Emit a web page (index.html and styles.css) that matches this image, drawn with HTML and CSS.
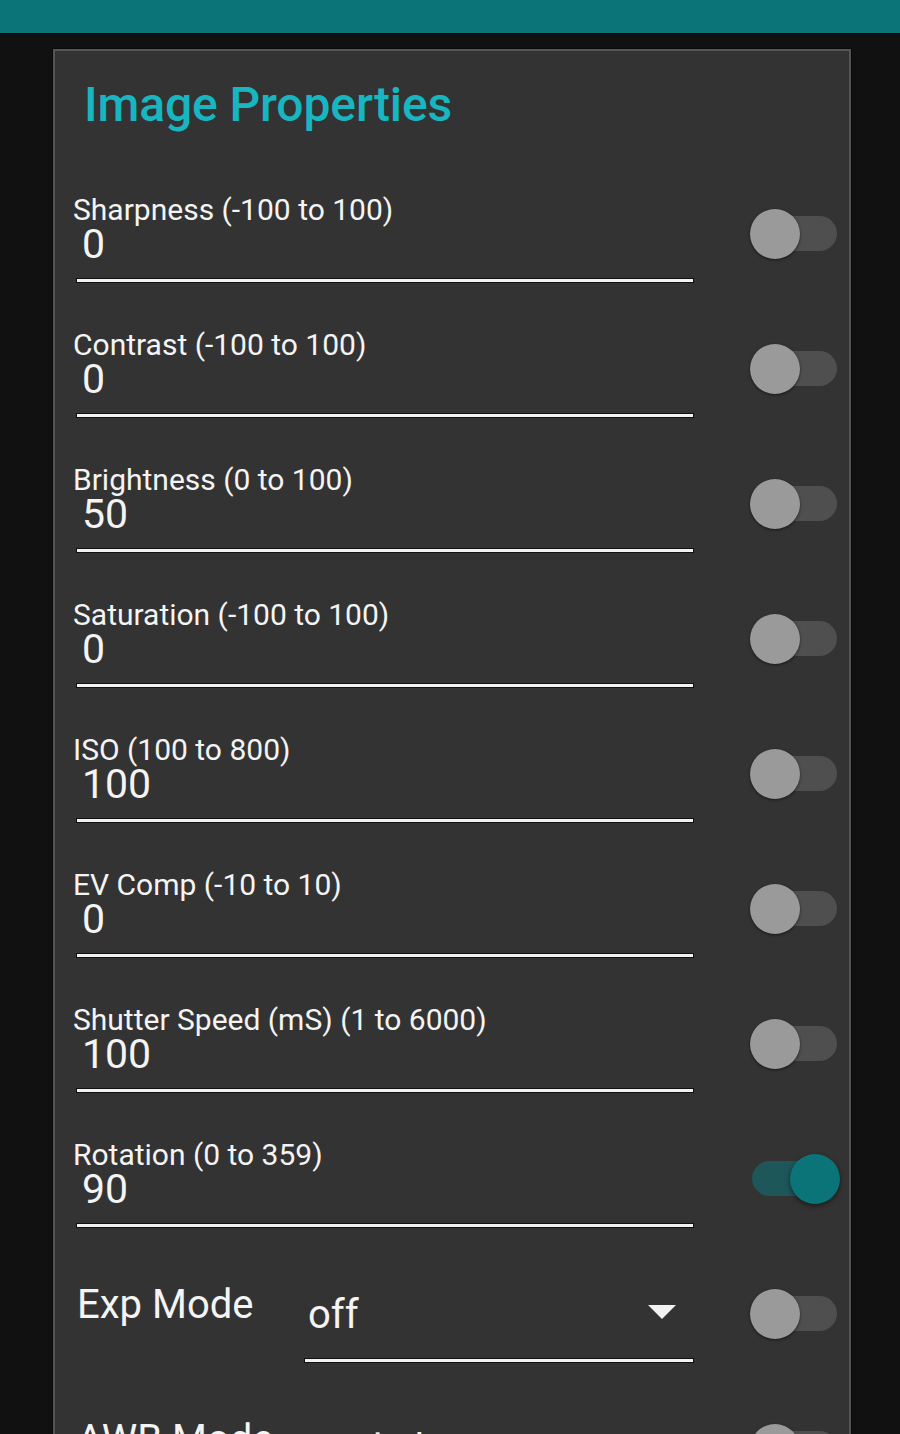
FILE: index.html
```html
<!DOCTYPE html>
<html>
<head>
<meta charset="utf-8">
<link rel="stylesheet" href="styles.css">
</head>
<body>
<div class="topbar"></div>
<div class="card">
  <h1 class="title">Image Properties</h1>

  <div class="row">
    <div class="field">
      <div class="label">Sharpness (-100 to 100)</div>
      <div class="value">0</div>
      <div class="underline"></div>
    </div>
    <div class="toggle"><span class="track"></span><span class="thumb"></span></div>
  </div>

  <div class="row">
    <div class="field">
      <div class="label">Contrast (-100 to 100)</div>
      <div class="value">0</div>
      <div class="underline"></div>
    </div>
    <div class="toggle"><span class="track"></span><span class="thumb"></span></div>
  </div>

  <div class="row">
    <div class="field">
      <div class="label">Brightness (0 to 100)</div>
      <div class="value">50</div>
      <div class="underline"></div>
    </div>
    <div class="toggle"><span class="track"></span><span class="thumb"></span></div>
  </div>

  <div class="row">
    <div class="field">
      <div class="label">Saturation (-100 to 100)</div>
      <div class="value">0</div>
      <div class="underline"></div>
    </div>
    <div class="toggle"><span class="track"></span><span class="thumb"></span></div>
  </div>

  <div class="row">
    <div class="field">
      <div class="label">ISO (100 to 800)</div>
      <div class="value">100</div>
      <div class="underline"></div>
    </div>
    <div class="toggle"><span class="track"></span><span class="thumb"></span></div>
  </div>

  <div class="row">
    <div class="field">
      <div class="label">EV Comp (-10 to 10)</div>
      <div class="value">0</div>
      <div class="underline"></div>
    </div>
    <div class="toggle"><span class="track"></span><span class="thumb"></span></div>
  </div>

  <div class="row">
    <div class="field">
      <div class="label">Shutter Speed (mS) (1 to 6000)</div>
      <div class="value">100</div>
      <div class="underline"></div>
    </div>
    <div class="toggle"><span class="track"></span><span class="thumb"></span></div>
  </div>

  <div class="row">
    <div class="field">
      <div class="label">Rotation (0 to 359)</div>
      <div class="value">90</div>
      <div class="underline"></div>
    </div>
    <div class="toggle on"><span class="track"></span><span class="thumb"></span></div>
  </div>

  <div class="row">
    <div class="field select-field">
      <div class="select-label">Exp Mode</div>
      <div class="select">
        <div class="select-value"><span class="select-text">off</span><span class="arrow"></span></div>
        <div class="underline"></div>
      </div>
    </div>
    <div class="toggle"><span class="track"></span><span class="thumb"></span></div>
  </div>

  <div class="row">
    <div class="field select-field">
      <div class="select-label">AWB Mode</div>
      <div class="select">
        <div class="select-value"><span class="select-text">sunlight</span><span class="arrow"></span></div>
        <div class="underline"></div>
      </div>
    </div>
    <div class="toggle"><span class="track"></span><span class="thumb"></span></div>
  </div>
</div>
</body>
</html>
```

FILE: styles.css
```css
html, body {
  margin: 0;
  padding: 0;
  background: #111111;
  font-family: Roboto, "Liberation Sans", sans-serif;
  color: #f4f4f4;
  overflow: hidden;
}

.topbar {
  height: 33px;
  background: #0a7478;
  border-bottom: 1px solid #050505;
}

.card {
  margin: 14px 0 0 52px;
  width: 800px;
  background: #333333;
  border: 1px solid #0a0a0a;
  border-bottom: none;
  box-shadow: inset 0 0 0 2px #555555;
  padding: 2px 2px 40px 2px;
  box-sizing: border-box;
  min-height: 1500px;
}

.title {
  margin: 26px 0 47px 29px;
  font-size: 48px;
  line-height: 56px;
  font-weight: 500;
  color: #17b6c0;
  letter-spacing: -0.1px;
}

.row {
  display: flex;
  align-items: flex-start;
  height: 135px;
  padding-left: 21px;
  box-sizing: border-box;
}

.field {
  width: 618px;
  padding-top: 15px;
}

.label {
  font-size: 30px;
  line-height: 30px;
  margin-left: -3px;
}

.value {
  font-size: 41px;
  line-height: 38px;
  margin-left: 6px;
}

.underline {
  height: 3px;
  background: #f2f2f2;
  border: 1px solid #111111;
  margin-top: 15px;
}

.select-field {
  display: flex;
  padding-top: 21px;
}

.select-label {
  width: 227px;
  font-size: 40px;
  line-height: 48px;
  margin-left: 1px;
}

.select {
  flex: 1;
  padding-top: 12px;
}

.select-value {
  display: flex;
  align-items: flex-start;
  height: 44px;
}

.select-text {
  flex: 1;
  font-size: 40px;
  line-height: 44px;
  padding-left: 4px;
}

.arrow {
  width: 0;
  height: 0;
  border-left: 14px solid transparent;
  border-right: 14px solid transparent;
  border-top: 14px solid #f2f2f2;
  margin: 12px 18px 0 0;
}

.select .underline {
  margin-top: 21px;
}

.toggle {
  position: relative;
  width: 90px;
  height: 50px;
  margin: 29px 0 0 56px;
}

.track {
  position: absolute;
  left: 2px;
  top: 7px;
  width: 85px;
  height: 35px;
  border-radius: 18px;
  background: #4f4f4f;
}

.thumb {
  position: absolute;
  left: 0;
  top: 0;
  width: 50px;
  height: 50px;
  border-radius: 50%;
  background: #9a9a9a;
  box-shadow: 0 1px 3px rgba(0, 0, 0, 0.55);
}

.toggle.on .track {
  background: #1e5759;
}

.toggle.on .thumb {
  left: 40px;
  background: #0a7478;
  box-shadow: 0 2px 5px rgba(0, 0, 0, 0.5);
}
```
